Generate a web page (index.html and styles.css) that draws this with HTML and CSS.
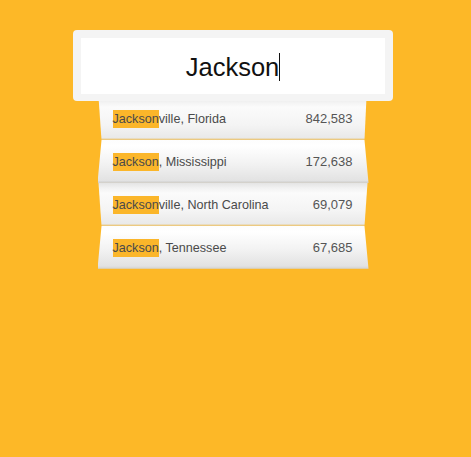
FILE: index.html
```html
<!DOCTYPE html>
<html>
<head>
<meta charset="utf-8">
<link rel="stylesheet" href="styles.css">
</head>
<body>
<div class="wrap">
  <div class="search">
    <div class="field"><span class="query">Jackson</span><span class="caret"></span></div>
  </div>
  <ul class="results">
    <li class="row fold-a first"><span class="name"><mark>Jackson</mark>ville, Florida</span><span class="pop">842,583</span></li>
    <li class="row fold-b"><span class="name"><mark>Jackson</mark>, Mississippi</span><span class="pop">172,638</span></li>
    <li class="row fold-a"><span class="name"><mark>Jackson</mark>ville, North Carolina</span><span class="pop">69,079</span></li>
    <li class="row fold-b last"><span class="name"><mark>Jackson</mark>, Tennessee</span><span class="pop">67,685</span></li>
  </ul>
</div>
</body>
</html>
```

FILE: styles.css
```css
html, body {
  margin: 0;
  padding: 0;
  background: #fdb827;
  height: 100%;
}
body {
  margin-right: 5px;
  font-family: "Liberation Sans", Arial, sans-serif;
}
.wrap {
  display: flex;
  flex-direction: column;
  align-items: center;
  padding-top: 30px;
}
.search {
  position: relative;
  z-index: 2;
  width: 320px;
  box-sizing: border-box;
  padding: 8px 8px 7px 8px;
  background: #f4f4f4;
  border-radius: 4px;
}
.field {
  height: 56px;
  background: #ffffff;
  display: flex;
  align-items: center;
  justify-content: center;
  padding-left: 0;
}
.query {
  font-size: 25.5px;
  color: #111;
  padding-top: 2px;
}
.caret {
  width: 1px;
  height: 28px;
  background: #111;
  margin-top: 2px;
}
.results {
  list-style: none;
  margin: -4px 0 0 0;
  padding: 0;
  width: 271px;
  position: relative;
  z-index: 1;
}
.row {
  height: 43px;
  box-sizing: border-box;
  display: flex;
  align-items: center;
  justify-content: space-between;
  padding: 0 16px 0 15px;
  font-size: 12.6px;
  color: #4a4a4a;
}
.fold-a {
  clip-path: polygon(1px 0, 270px 0, 267px 100%, 4px 100%);
  background: linear-gradient(#e4e4e4 0, #f2f2f2 5px, #fbfbfb 10px, #f4f4f4 28px, #e9e9e9 41px, #e8cf98 42px, #f0c469 43px);
}
.first {
  clip-path: polygon(1px 0, 269px 0, 267px 100%, 4px 100%);
}
.fold-b {
  clip-path: polygon(4px 0, 267px 0, 271px 100%, 0 100%);
  background: linear-gradient(#fdfdfd 0, #ffffff 6px, #f2f2f2 24px, #e2e2e2 41px, #cfcfcf 42px, #d9d4c8 43px);
}
.last {
  background: linear-gradient(#fdfdfd 0, #ffffff 6px, #f2f2f2 24px, #e2e2e2 40px, #d6d6d6 42px, #e5c680 43px);
}
.name mark {
  background: #fbb62a;
  color: #4a4a4a;
  padding: 2px 0 2px 0;
}
.pop {
  font-size: 13px;
  color: #555;
}
```
